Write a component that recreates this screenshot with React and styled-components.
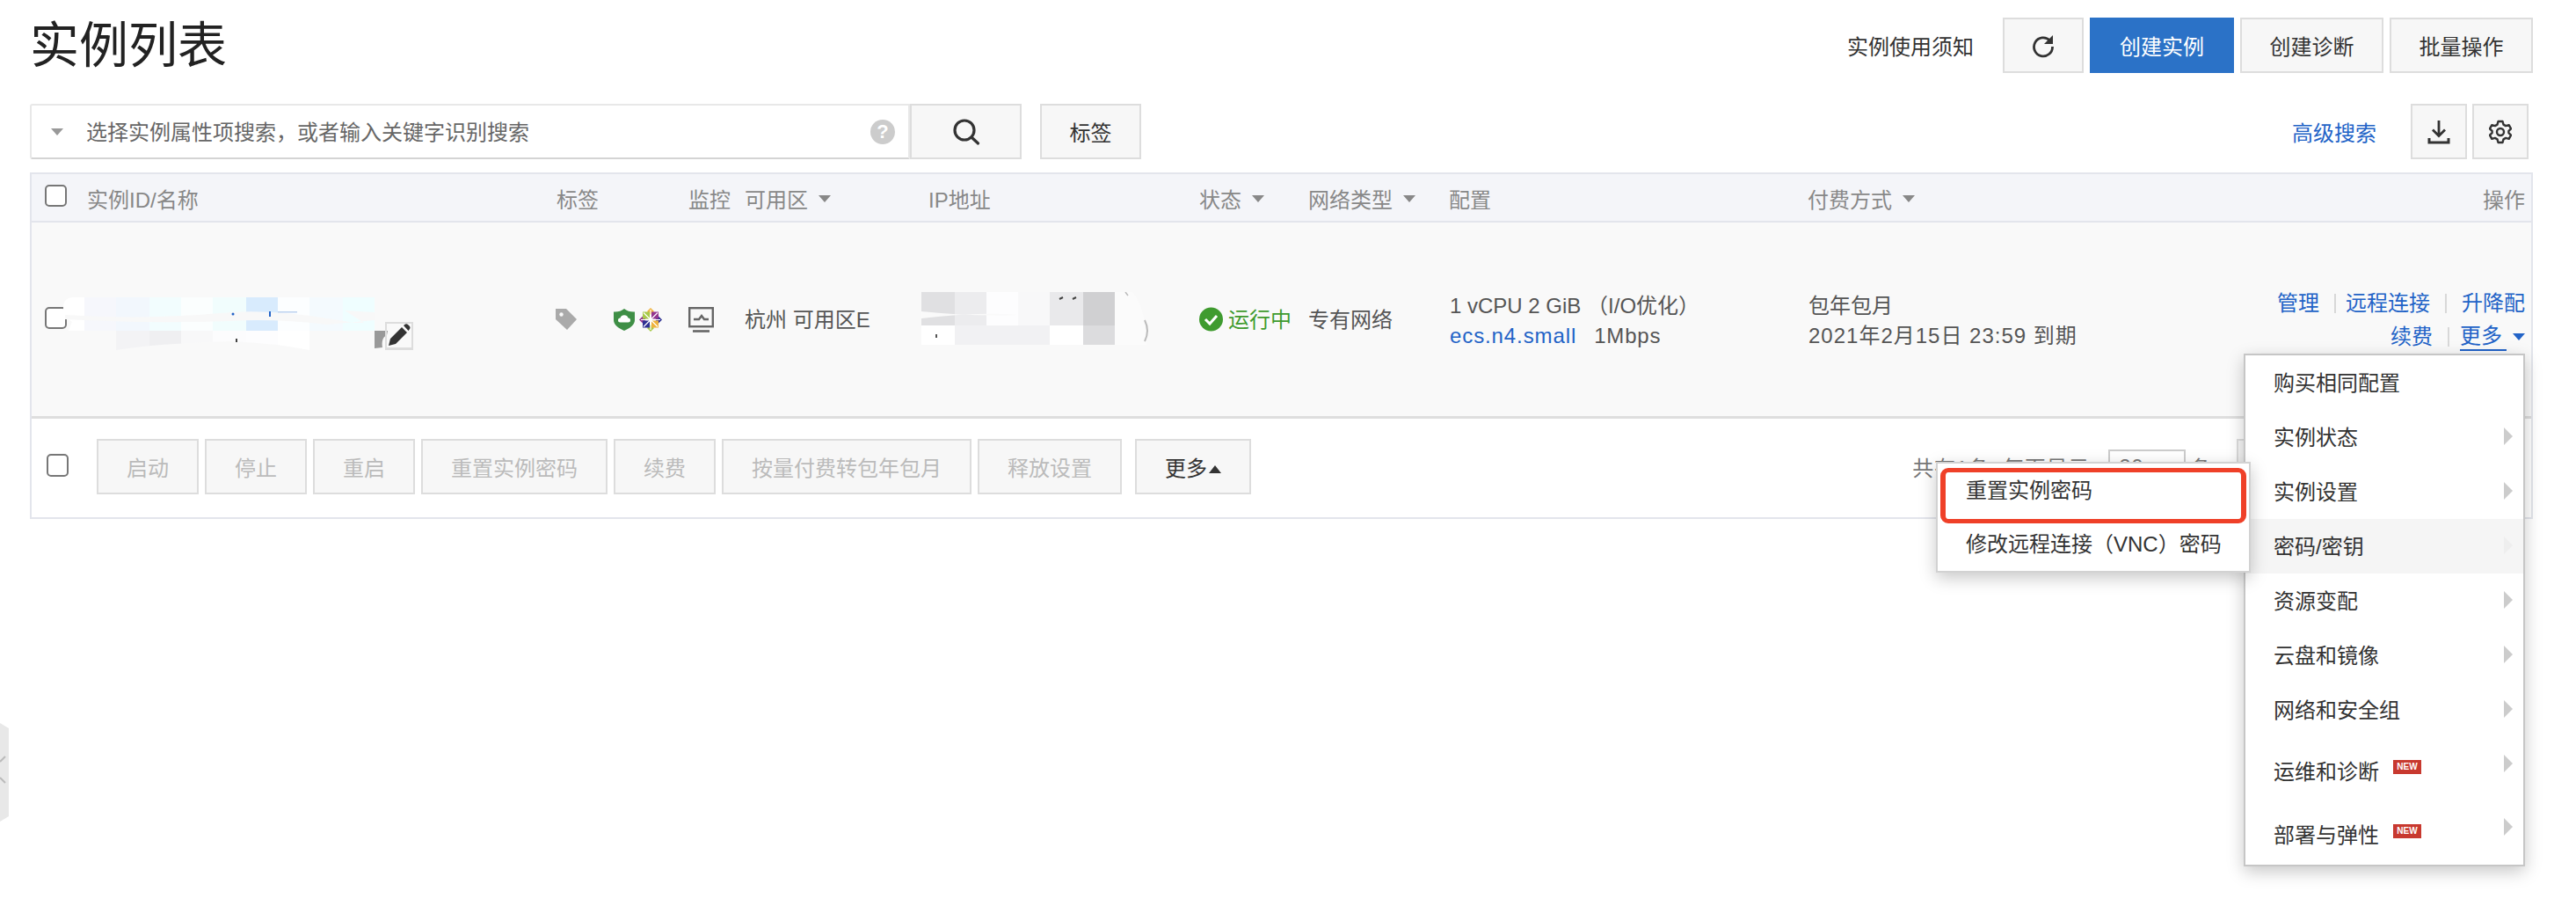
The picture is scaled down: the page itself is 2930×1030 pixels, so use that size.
import React from 'react';
import styled, { createGlobalStyle } from 'styled-components';

const GlobalStyle = createGlobalStyle`
  html, body { margin: 0; padding: 0; background: #fff; }
  body {
    font-family: "Liberation Sans", "Noto Sans CJK SC", sans-serif;
    font-size: 24px;
    color: #333;
  }
`;

const COLUMNS = '63px 534px 150px 64px 209px 308px 124px 160px 408px 1fr 340px';

const Page = styled.div`
  position: relative;
  width: 2930px;
  height: 1030px;
  box-sizing: border-box;
  padding: 20px 49px 0 34px;
  overflow: hidden;
`;

const Header = styled.div`
  display: flex;
  justify-content: space-between;
  align-items: center;
  height: 63px;
`;

const Title = styled.h1`
  margin: 0;
  font-size: 56px;
  line-height: 63px;
  font-weight: 400;
  color: #222;
`;

const Actions = styled.div`
  display: flex;
  align-items: center;
  gap: 7px;
`;

const Notice = styled.span`
  margin-right: 26px;
  color: #333;
`;

const Button = styled.button`
  display: inline-flex;
  align-items: center;
  justify-content: center;
  box-sizing: border-box;
  height: 63px;
  width: ${p => p.$width || 'auto'};
  padding: ${p => (p.$width ? '0' : '0 32px')};
  border: 2px solid ${p => (p.$primary ? '#2b72c7' : '#ddd')};
  border-radius: 0;
  background: ${p => (p.$primary ? '#2b72c7' : '#f7f7f7')};
  color: ${p => (p.$primary ? '#fff' : p.$disabled ? '#bbb' : '#333')};
  font: inherit;
`;

const SearchRow = styled.div`
  display: flex;
  align-items: center;
  height: 63px;
  margin-top: 35px;
`;

const SearchBox = styled.div`
  position: relative;
  display: flex;
  align-items: center;
  box-sizing: border-box;
  width: 1001px;
  height: 63px;
  padding-left: 22px;
  border: 2px solid #e8e8e8;
  border-bottom-color: #d4d4d4;
  border-radius: 3px 0 0 3px;
`;

const Placeholder = styled.span`
  margin: -2px 0 0 26px;
  color: #666;
  flex: 1;
`;

const Caret = styled.i`
  display: inline-block;
  width: 0;
  height: 0;
  border-left: 7px solid transparent;
  border-right: 7px solid transparent;
  border-top: 8px solid ${p => p.$color || '#999'};
  margin-left: ${p => p.$gap || 0}px;
`;

const CaretUp = styled.i`
  display: inline-block;
  width: 0;
  height: 0;
  border-left: 7px solid transparent;
  border-right: 7px solid transparent;
  border-bottom: 9px solid #333;
  margin-top: 6px;
`;

const Help = styled.span`
  width: 28px;
  height: 28px;
  margin-right: 15px;
  border-radius: 50%;
  background: #ccc;
  color: #fff;
  font-size: 22px;
  font-weight: 700;
  line-height: 28px;
  text-align: center;
`;

const TagButton = styled(Button)`
  margin-left: 21px;
`;

const SearchTools = styled.div`
  display: flex;
  align-items: center;
  gap: 6px;
  margin-left: auto;
  margin-right: 5px;
`;

const Link = styled.a`
  color: #2263c7;
  text-decoration: none;
  letter-spacing: ${p => p.$spacing || 0};
`;

const AdvancedLink = styled(Link)`
  margin-right: 33px;
`;

const Table = styled.div`
  position: relative;
  margin-top: 15px;
  height: 394px;
  box-sizing: border-box;
  border: 2px solid #e3e5ec;
`;

const HeadRow = styled.div`
  display: grid;
  grid-template-columns: ${COLUMNS};
  align-items: center;
  box-sizing: border-box;
  height: 55px;
  padding-top: 2px;
  background: #f4f5f9;
  border-bottom: 2px solid #e3e5ec;
  color: #888;
`;

const HeadCell = styled.div`
  display: flex;
  align-items: center;
  justify-content: ${p => (p.$right ? 'flex-end' : 'flex-start')};
  padding-right: ${p => (p.$right ? '7px' : '0')};
`;

const Checkbox = styled.span`
  display: block;
  box-sizing: border-box;
  width: 25px;
  height: 25px;
  margin-left: 15px;
  margin-top: ${p => p.$top || 0}px;
  border: 2px solid #777;
  border-radius: 5px;
  background: #fff;
`;

const Row = styled.div`
  display: grid;
  grid-template-columns: ${COLUMNS};
  align-items: center;
  height: 220px;
  background: #f9f9f9;
  border-bottom: 3px solid #dedede;
  color: #555;
`;

const NameCell = styled.div`
  display: flex;
  align-items: flex-end;
  margin-left: -27px;
  margin-top: 9px;
`;

const EditBox = styled.span`
  display: flex;
  align-items: center;
  justify-content: center;
  box-sizing: border-box;
  width: 32px;
  height: 32px;
  margin-left: -3px;
  border: 2px solid #ddd;
  border-bottom-width: 3px;
`;

const IconCell = styled.div`
  display: flex;
  align-items: center;
  margin-left: ${p => p.$left || 0}px;
`;

const ShieldGroup = styled.span`
  display: flex;
  align-items: center;
  gap: 5px;
  margin-left: 41px;
`;

const PlainCell = styled.div`
  margin-top: -3px;
`;

const StatusCell = styled.div`
  display: flex;
  align-items: center;
  gap: 6px;
  color: #3f9b2f;
`;

const StatusText = styled.span`
  margin-top: -3px;
`;

const Lines = styled.div`
  display: flex;
  flex-direction: column;
  margin: 3px 0 0 1px;
  line-height: 34px;
  white-space: nowrap;
`;

const DateLine = styled.span`
  letter-spacing: 1px;
`;

const Spec = styled.span`
  margin-left: 20px;
  letter-spacing: 0.8px;
`;

const OpCell = styled.div`
  display: flex;
  flex-direction: column;
  align-items: flex-end;
  gap: 7px;
  margin-top: 2px;
  padding-right: 7px;
`;

const OpLine = styled.div`
  display: flex;
  align-items: center;
  line-height: 30px;
`;

const Sep = styled.i`
  display: block;
  width: 2px;
  height: 22px;
  margin: 0 ${p => p.$right ?? 17}px 0 17px;
  background: #d8d8d8;
`;

const MoreLink = styled(Link)`
  border-bottom: 2px solid #2263c7;
  line-height: 30px;
  padding-right: 5px;
  margin-left: -5px;
`;

const Toolbar = styled.div`
  display: flex;
  align-items: center;
  gap: 7px;
  height: 112px;
  padding: 0 19px 3px 17px;
  box-sizing: border-box;
`;

const ToolbarCheck = styled(Checkbox)`
  margin: 0 25px 4px 0;
  height: 26px;
`;

const MoreButton = styled(Button)`
  gap: 2px;
  margin-left: 8px;
  width: 132px;
  padding: 0;
`;

const Pager = styled.div`
  display: flex;
  align-items: center;
  margin-left: auto;
  color: #777;
  letter-spacing: 0.7px;
`;

const PageInput = styled.span`
  display: block;
  box-sizing: border-box;
  width: 88px;
  height: 40px;
  margin: 0 5px 0 14px;
  padding-left: 10px;
  border: 2px solid #ccc;
  color: #777;
  line-height: 36px;
`;

const PageBox = styled.span`
  display: block;
  box-sizing: border-box;
  width: 316px;
  height: 63px;
  margin-left: 28px;
  border: 2px solid #ddd;
  background: #f7f7f7;
`;

const Menu = styled.ul`
  position: absolute;
  top: 204px;
  right: 7px;
  width: 320px;
  box-sizing: border-box;
  margin: 0;
  padding: 0;
  list-style: none;
  background: #fff;
  border: 2px solid #c6c6c6;
  box-shadow: 0 6px 18px rgba(0, 0, 0, 0.22);
  z-index: 5;
`;

const MenuItem = styled.li`
  position: relative;
  display: flex;
  align-items: center;
  box-sizing: border-box;
  height: ${p => p.$height || 62}px;
  padding: 0 0 4px 32px;
  background: ${p => (p.$active ? '#f5f5f5' : 'transparent')};
  color: #333;
`;

const NewBadge = styled.span`
  margin-left: 16px;
  margin-top: -6px;
  width: 32px;
  height: 16px;
  background: #c8392f;
  color: #fff;
  font-family: "Liberation Sans", sans-serif;
  font-size: 10px;
  font-weight: 700;
  line-height: 16px;
  text-align: center;
`;

const Arrow = styled.i`
  position: absolute;
  right: 12px;
  top: 50%;
  margin-top: ${p => (p.$shift || -1) - 10}px;
  width: 0;
  height: 0;
  border-top: 10px solid transparent;
  border-bottom: 10px solid transparent;
  border-left: 10px solid ${p => (p.$faint ? '#eee' : '#ccc')};
`;

const SubMenu = styled.ul`
  position: absolute;
  top: -65px;
  right: 310px;
  width: 358px;
  box-sizing: border-box;
  margin: 0;
  padding: 0;
  list-style: none;
  background: #fff;
  border: 2px solid #d2d2d2;
  box-shadow: 0 6px 18px rgba(0, 0, 0, 0.22);
  z-index: 6;
`;

const SubItem = styled.li`
  display: flex;
  align-items: center;
  box-sizing: border-box;
  height: 61px;
  padding: 0 0 4px 32px;
  color: #333;
  white-space: nowrap;
`;

const Annotation = styled.span`
  position: absolute;
  top: 5px;
  left: 3px;
  width: 348px;
  height: 63px;
  box-sizing: border-box;
  border: 5px solid #ef4028;
  border-left-width: 6px;
  border-right-width: 6px;
  border-radius: 9px;
`;

const SideHandle = styled.svg`
  position: absolute;
  left: 0;
  top: 820px;
`;

const RefreshIcon = () => (
  <svg width="28" height="28" viewBox="0 0 28 28" fill="none">
    <path d="M21.500 8A10.500 10.500 0 1 0 24.500 15" stroke="#333" strokeWidth="2.800" />
    <path d="M25 2v10H15z" fill="#333" />
  </svg>
);

const SearchIcon = () => (
  <svg width="32" height="32" viewBox="0 0 32 32" fill="none" stroke="#333" strokeWidth="3.200" strokeLinecap="round">
    <circle cx="14" cy="14" r="11" />
    <path d="M22 22l7.500 7" />
  </svg>
);

const DownloadIcon = () => (
  <svg width="26" height="28" viewBox="0 0 26 28" fill="none" stroke="#333" strokeWidth="2.800">
    <path d="M13 1v17M6 11.500l7 7 7-7" />
    <path d="M2 21v5h22v-5" strokeWidth="3" />
  </svg>
);

const GearIcon = () => (
  <svg width="26" height="28" viewBox="0 0 26 28" fill="none" stroke="#333" strokeWidth="2.400" strokeLinejoin="round">
    <path d="M10.500 2h5l1 3.600 2.600 1.500 3.600-1 2.400 4.200-2.700 2.600v2.200l2.700 2.600-2.400 4.200-3.600-1-2.600 1.500-1 3.600h-5l-1-3.600-2.600-1.500-3.600 1-2.400-4.200 2.700-2.600v-2.200l-2.700-2.600 2.400-4.200 3.600 1 2.600-1.500z" />
    <circle cx="13" cy="14" r="4" />
  </svg>
);

const MOSAIC_TOP = ['#f6f7fc', '#f2f7fd', '#f2fdfe', '#fbfefe', '#f1fdfd', '#d8ebfd', '#fcfeff', '#f4fafe', '#effeff'];
const MOSAIC_BOTTOM = ['#f9f9f9', '#f3f3f5', '#efeff1', '#f8f8f9', '#fcfcfd', '#fdfdfe', '#ffffff', '#f9f9f9', '#f9f9f9'];
const MOSAIC_X = [24, 60, 98, 134, 170, 208, 244, 280, 318, 354];

const NameMosaic = () => (
  <svg width="369" height="60" viewBox="0 0 369 60">
    <path d="M0 12Q0 0 12 0H24V38H6l4-10L0 20z" fill="#fff" />
    {MOSAIC_TOP.map((c, i) => (
      <rect key={i} x={MOSAIC_X[i]} y="0" width={MOSAIC_X[i + 1] - MOSAIC_X[i]} height="38" fill={c} />
    ))}
    {MOSAIC_BOTTOM.map((c, i) => (
      <rect key={i} x={MOSAIC_X[i]} y="38" width={MOSAIC_X[i + 1] - MOSAIC_X[i]} height="22" fill={c} />
    ))}
    <path d="M2 20Q100 26 190 17Q240 14 300 24L332 29L342 29L320 15L354 17V26L300 31Q240 24 190 27Q90 30 2 25z" fill="#f8f8f8" />
    <path d="M60 60Q110 52 190 50Q240 52 280 60H244z" fill="#f9f9f9" />
    <circle cx="193" cy="19" r="1.500" fill="#2263c7" />
    <rect x="234" y="16" width="2" height="6" fill="#2263c7" />
    <rect x="244" y="16" width="22" height="1.500" fill="#7ba6e0" opacity="0.5" />
    <rect x="196" y="47" width="2" height="4" fill="#444" />
    <path d="M354 38h15l-1 5c-5 2-6 8-5 14l-9 1z" fill="#999" />
  </svg>
);

const IP_X = [0, 38, 74, 110, 146, 184, 220];
const IP_TOP = ['#e0e0e2', '#ececee', '#fdfdfe', '#f8f8f9', '#e9e9eb', '#d0d0d2'];
const IP_BOTTOM = ['#ffffff', '#f1f1f3', '#f1f1f3', '#f1f1f3', '#ffffff', '#dcdcde'];

const IpMosaic = () => (
  <svg width="262" height="62" viewBox="0 0 262 62" fill="none">
    <path d="M220 0h20q16 20 16 60h-36z" fill="#fbfbfb" />
    {IP_TOP.map((c, i) => (
      <rect key={i} x={IP_X[i]} y="0" width={IP_X[i + 1] - IP_X[i]} height="38" fill={c} />
    ))}
    {IP_BOTTOM.map((c, i) => (
      <rect key={i} x={IP_X[i]} y="38" width={IP_X[i + 1] - IP_X[i]} height="22" fill={c} />
    ))}
    <path d="M0 22Q60 28 110 26L96 25Q50 24 0 30z" fill="#fafafa" />
    <rect x="16" y="48" width="2" height="4" fill="#555" />
    <path d="M157 8l4-2M172 8l4-2" stroke="#444" strokeWidth="2" />
    <path d="M254 32q6 12 0 24" stroke="#bbb" strokeWidth="2" />
    <path d="M232 0l3 4" stroke="#bbb" strokeWidth="1.500" />
  </svg>
);

const PencilIcon = () => (
  <svg width="26" height="26" viewBox="0 0 26 26">
    <path d="M1 25l2-8L16 4l6 6L9 23z M18 2l2-1.500q1.500-.8 3 .5l2 2q1 1.500 0 3l-1.500 2z" fill="#333" />
  </svg>
);

const TagIcon = () => (
  <svg width="26" height="26" viewBox="0 0 26 26">
    <path d="M1 1h12l12 12-11 12L1 13z" fill="#aaa" />
    <circle cx="7.500" cy="7.500" r="2.200" fill="#f9f9f9" />
  </svg>
);

const ShieldIcon = () => (
  <svg width="24" height="25" viewBox="0 0 24 25">
    <path d="M12 0Q17 4 24 3.500V13c0 5-5 9-12 12C5 22 0 18 0 13V3.500Q7 4 12 0z" fill="#3f8f46" />
    <path d="M7.500 15.500a2.500 2.500 0 0 1 0-5 4.800 4.800 0 0 1 9 0 2.500 2.500 0 0 1 0 5z" fill="#fff" />
  </svg>
);

const CentosIcon = () => (
  <svg width="26" height="27" viewBox="0 0 26 27">
    <path d="M13 0l4 4-4 4-4-4z" fill="#efb23d" />
    <path d="M26 13.500l-4 4-4-4 4-4z" fill="#2e3192" />
    <path d="M13 27l-4-4 4-4 4 4z" fill="#a8c94a" />
    <path d="M0 13.500l4-4 4 4-4 4z" fill="#93358f" />
    <rect x="4" y="4.500" width="8" height="8" fill="#a8c94a" />
    <rect x="14" y="4.500" width="8" height="8" fill="#93358f" />
    <rect x="4" y="14.500" width="8" height="8" fill="#2e3192" />
    <rect x="14" y="14.500" width="8" height="8" fill="#efb23d" />
    <path d="M5 5.500l16 16M21 5.500l-16 16M13 2v23M2 13.500h22" stroke="#fff" strokeWidth="1.200" />
  </svg>
);

const MonitorIcon = () => (
  <svg width="29" height="29" viewBox="0 0 29 29" fill="none" stroke="#666" strokeWidth="2.400">
    <rect x="1.200" y="1.200" width="26.600" height="21" />
    <path d="M6 14h6l3-4 3 4h5" />
    <path d="M5 27.500h19" strokeWidth="2.600" />
  </svg>
);

const StatusIcon = () => (
  <svg width="27" height="28" viewBox="0 0 27 28">
    <circle cx="13.500" cy="14" r="13.500" fill="#3f9b2f" />
    <path d="M7 14l5 5 8-9" fill="none" stroke="#fff" strokeWidth="3" />
  </svg>
);

const TOOL_BUTTONS = ['启动', '停止', '重启', '重置实例密码', '续费', '按量付费转包年包月', '释放设置'];

const MENU = [
  { label: '购买相同配置', plain: true },
  { label: '实例状态' },
  { label: '实例设置' },
  { label: '密码/密钥', active: true },
  { label: '资源变配' },
  { label: '云盘和镜像' },
  { label: '网络和安全组' },
  { label: '运维和诊断', isNew: true, height: 78, shift: -9 },
  { label: '部署与弹性', isNew: true, height: 67, shift: -10 },
];

export default function App() {
  return (
    <Page>
      <GlobalStyle />
      <Header>
        <Title>实例列表</Title>
        <Actions>
          <Notice>实例使用须知</Notice>
          <Button $width="92px"><RefreshIcon /></Button>
          <Button $primary $width="164px">创建实例</Button>
          <Button $width="163px">创建诊断</Button>
          <Button $width="163px">批量操作</Button>
        </Actions>
      </Header>

      <SearchRow>
        <SearchBox>
          <Caret $color="#999" />
          <Placeholder>选择实例属性项搜索，或者输入关键字识别搜索</Placeholder>
          <Help>?</Help>
        </SearchBox>
        <Button $width="127px"><SearchIcon /></Button>
        <TagButton $width="115px">标签</TagButton>
        <SearchTools>
          <AdvancedLink>高级搜索</AdvancedLink>
          <Button $width="64px"><DownloadIcon /></Button>
          <Button $width="64px"><GearIcon /></Button>
        </SearchTools>
      </SearchRow>

      <Table>
        <HeadRow>
          <HeadCell><Checkbox $top={-6} /></HeadCell>
          <HeadCell>实例ID/名称</HeadCell>
          <HeadCell>标签</HeadCell>
          <HeadCell>监控</HeadCell>
          <HeadCell>可用区<Caret $gap={12} $color="#888" /></HeadCell>
          <HeadCell>IP地址</HeadCell>
          <HeadCell>状态<Caret $gap={12} $color="#888" /></HeadCell>
          <HeadCell>网络类型<Caret $gap={12} $color="#888" /></HeadCell>
          <HeadCell>配置</HeadCell>
          <HeadCell>付费方式<Caret $gap={12} $color="#888" /></HeadCell>
          <HeadCell $right>操作</HeadCell>
        </HeadRow>

        <Row>
          <div><Checkbox $top={-4} /></div>
          <NameCell>
            <NameMosaic />
            <EditBox><PencilIcon /></EditBox>
          </NameCell>
          <IconCell $left={-2}>
            <TagIcon />
            <ShieldGroup>
              <ShieldIcon />
              <CentosIcon />
            </ShieldGroup>
          </IconCell>
          <IconCell><MonitorIcon /></IconCell>
          <PlainCell>杭州 可用区E</PlainCell>
          <IconCell $left={-8}><IpMosaic /></IconCell>
          <StatusCell><StatusIcon /><StatusText>运行中</StatusText></StatusCell>
          <PlainCell>专有网络</PlainCell>
          <Lines>
            <span>1 vCPU 2 GiB （I/O优化）</span>
            <span><Link $spacing="0.9px">ecs.n4.small</Link><Spec>1Mbps</Spec></span>
          </Lines>
          <Lines>
            <span>包年包月</span>
            <DateLine>2021年2月15日 23:59 到期</DateLine>
          </Lines>
          <OpCell>
            <OpLine>
              <Link>管理</Link><Sep $right={11} />
              <Link>远程连接</Link><Sep />
              <Link>升降配</Link>
            </OpLine>
            <OpLine>
              <Link>续费</Link><Sep />
              <MoreLink>更多</MoreLink>
              <Caret $gap={7} $color="#2263c7" />
            </OpLine>
          </OpCell>
        </Row>

        <Toolbar>
          <ToolbarCheck />
          {TOOL_BUTTONS.map(t => <Button key={t} $disabled>{t}</Button>)}
          <MoreButton>更多<CaretUp /></MoreButton>
          <Pager>
            共有1条, 每页显示:
            <PageInput>20</PageInput>
            条
            <PageBox />
          </Pager>
        </Toolbar>

        <Menu>
          {MENU.map(item => (
            <MenuItem key={item.label} $active={item.active} $height={item.height}>
              {item.label}
              {item.isNew && <NewBadge>NEW</NewBadge>}
              {!item.plain && <Arrow $shift={item.shift} $faint={item.active} />}
              {item.active && (
                <SubMenu>
                  <SubItem>重置实例密码</SubItem>
                  <SubItem>修改远程连接（VNC）密码</SubItem>
                  <Annotation />
                </SubMenu>
              )}
            </MenuItem>
          ))}
        </Menu>
      </Table>

      <SideHandle width="10" height="116" viewBox="0 0 10 116">
        <path d="M0 2l10 6v100L0 114z" fill="#e8e8e8" />
        <path d="M6 40L0 46M0 64l6 6" stroke="#bbb" strokeWidth="2" />
      </SideHandle>
    </Page>
  );
}
